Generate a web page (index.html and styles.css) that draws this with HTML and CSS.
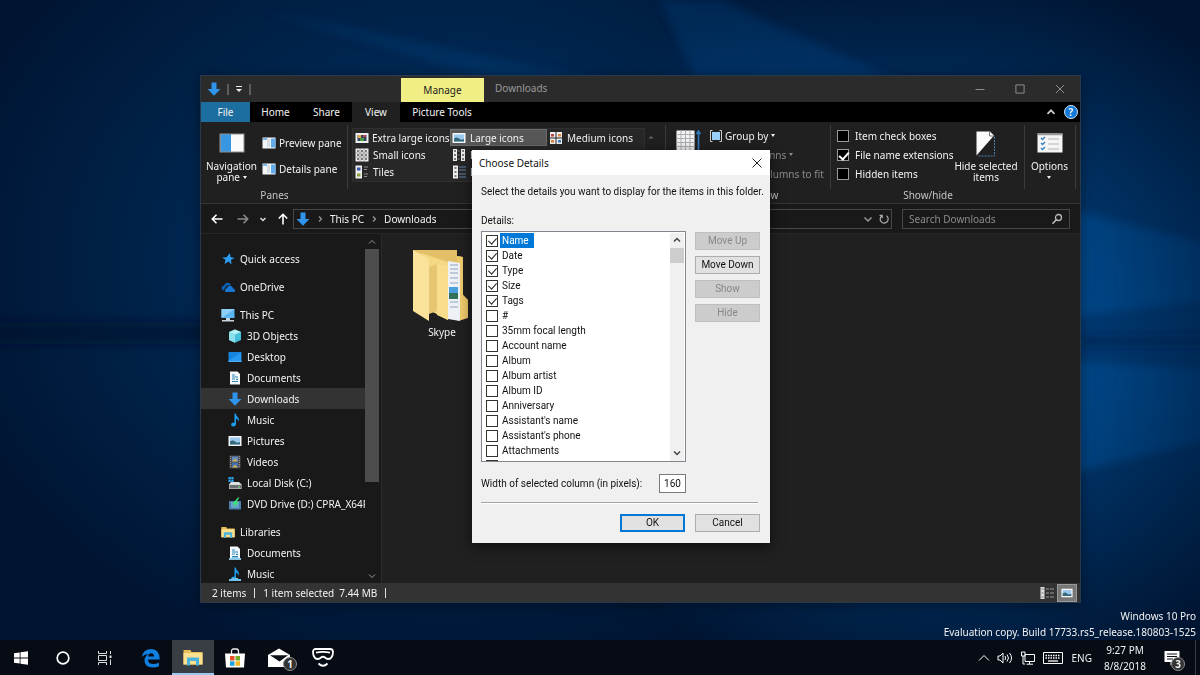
FILE: index.html
```html
<!DOCTYPE html>
<html lang="en">
<head>
<meta charset="utf-8">
<title>Downloads</title>
<link rel="stylesheet" href="styles.css">
</head>
<body>
<svg class="sprite" aria-hidden="true">
  <symbol id="arrow-down" viewBox="0 0 14 14"><path d="M4.500 0.500h5v6.500h4L7 13.800 0.500 7h4z" fill="#2f94ea"/></symbol>
  <symbol id="pic" viewBox="0 0 14 12"><rect x=".5" y="1" width="13" height="10" fill="#f4f6f8"/><rect x="2" y="2.500" width="10" height="7" fill="#9cc8ee"/><path d="M2 6.500q3-2 5 0t5 .5v2.500H2z" fill="#33697a"/></symbol>
  <symbol id="monitor" viewBox="0 0 14 14"><rect x=".5" y="1" width="13" height="9" fill="#5ab4f0"/><path d="M.5 10 13.500 1H.5z" fill="#8fd0f8"/><path d="M5 10h4v2h4v1.500H1V12h4z" fill="#c8d6e0"/></symbol>
  <symbol id="doc" viewBox="0 0 14 14"><path d="M2 .5h7.500L12 3v10.500H2z" fill="#f5f8fa"/><path d="M4 4h3M4 6h6M4 8h3M4 10.500h6M8 8.300h2" stroke="#2b87b8" stroke-width="1.200"/></symbol>
  <symbol id="note" viewBox="0 0 14 14"><path d="M6.500.5h1.300q.3 2.500 2 3.500 2 2 .8 4.800-.4-2.500-2.600-3.300v5.800q-.3 2.200-2.600 2.200Q3.200 13.300 3 11.500q.2-2 3.500-2z" fill="#1b9df0"/></symbol>
  <symbol id="pane" viewBox="0 0 14 12"><rect x=".5" y=".5" width="13" height="11" fill="#f3f6f8"/><rect x="5" y="2" width="3" height="8" fill="#d5dde4"/><rect x="9" y="1.500" width="4.500" height="9" fill="#62acec"/><path d="M1 2h4" stroke="#7eb9ec" stroke-width="2"/></symbol>
  <symbol id="folder" viewBox="0 0 20 18"><path d="M.5 2h7l1 2h11v12.500H.5z" fill="#e9bd55"/><path d="M.5 5h19v11.500H.5z" fill="#fbe08e"/><path d="M4 17.500V9.500h12v8h-3V13H7v4.500z" fill="#4bb3dc"/></symbol>
</svg>

<svg class="wallpaper" viewBox="0 0 1200 675" preserveAspectRatio="none" aria-hidden="true">
  <defs>
    <radialGradient id="glow" gradientUnits="userSpaceOnUse" cx="0" cy="0" r="1" gradientTransform="translate(930 330) scale(420 370)"><stop offset="0" stop-color="#004c92"/><stop offset=".45" stop-color="#003d78" stop-opacity=".8"/><stop offset="1" stop-color="#003d78" stop-opacity="0"/></radialGradient>
    <radialGradient id="haze" gradientUnits="userSpaceOnUse" cx="0" cy="0" r="1" gradientTransform="translate(450 260) scale(520 420)"><stop offset="0" stop-color="#00366c"/><stop offset="1" stop-color="#00366c" stop-opacity="0"/></radialGradient>
    <linearGradient id="beam" x1="0" x2="1"><stop offset="0" stop-color="#0068be" stop-opacity=".55"/><stop offset="1" stop-color="#0068be" stop-opacity=".1"/></linearGradient>
    <filter id="soft" x="-20%" y="-20%" width="140%" height="140%"><feGaussianBlur stdDeviation="5"/></filter>
  </defs>
  <path d="M0 0h1200v675H0z" fill="#001532"/>
  <path d="M0 0h1200v675H0z" fill="url(#haze)"/>
  <path d="M0 0h1200v675H0z" fill="url(#glow)"/>
  <g filter="url(#soft)">
    <path d="M900 165 1210 245v55L1000 325z" fill="url(#beam)"/>
    <path d="M900 350 1210 370v70L1000 490z" fill="url(#beam)"/>
    <path d="M260 10 700 100H560z" fill="#005aa8" opacity=".18"/>
    <path d="M660 0h60l200 90H700z" fill="#005aa8" opacity=".2"/>
    <path d="M-10 322h220v22H-10z" fill="#000f2b" opacity=".6"/>
    <path d="M1080 337h130v8H1080z" fill="#001f48" opacity=".6"/>
  </g>
</svg>

<main class="desktop">
  <section class="window" aria-label="Downloads">
    <header class="titlebar">
      <div class="quick">
        <svg class="i14"><use href="#arrow-down"/></svg>
        <span class="bar"></span>
        <svg class="i8" viewBox="0 0 8 8"><path d="M1 1.500h6" stroke="#eee"/><path d="M1 4h6L4 7z" fill="#eee"/></svg>
        <span class="bar"></span>
      </div>
      <div class="manage">Manage</div>
      <h1 class="wtitle">Downloads</h1>
      <div class="winbtns">
        <button aria-label="Minimize"><svg class="i10" viewBox="0 0 10 10"><path d="M.5 5.500h9"/></svg></button>
        <button aria-label="Maximize"><svg class="i10" viewBox="0 0 10 10"><path d="M.9.9h8.200v8.200H.9z"/></svg></button>
        <button aria-label="Close"><svg class="i10" viewBox="0 0 10 10"><path d="m1 1 8 8M9 1 1 9"/></svg></button>
      </div>
    </header>

    <nav class="tabs">
      <button class="tab file">File</button>
      <button class="tab">Home</button>
      <button class="tab">Share</button>
      <button class="tab view">View</button>
      <button class="tab tools">Picture Tools</button>
      <span class="grow"></span>
      <svg class="i10" viewBox="0 0 10 10"><path d="M1.500 6.800 5 3.300l3.500 3.500" fill="none" stroke="#ccc" stroke-width="1.700"/></svg>
      <button class="help" aria-label="Help">?</button>
    </nav>

    <div class="ribbon">
      <div class="group panes">
        <div class="gbody">
          <button class="big"><svg class="navicon" viewBox="0 0 26 20"><rect x=".5" y=".5" width="25" height="19" fill="#8a9096"/><rect x="2" y="1.500" width="10" height="17" fill="#3797e2"/><rect x="12" y="1.500" width="12.500" height="17" fill="#fbfbfb"/></svg><span>Navigation<br>pane <i class="caret"></i></span></button>
          <div class="stack">
            <button class="row"><svg class="i14"><use href="#pane"/></svg>Preview pane</button>
            <button class="row"><svg class="i14"><use href="#pane"/></svg>Details pane</button>
          </div>
        </div>
        <div class="gname">Panes</div>
      </div>
      <div class="group layout">
        <div class="gallery">
          <button class="row"><svg class="i14" viewBox="0 0 14 12"><rect x=".5" y="1" width="13" height="10" fill="#eceff2"/><path d="M2.500 3h9v6h-9z" fill="#35455f"/><path d="M3 3h3v3H3z" fill="#e8a84c"/><path d="M8 3h3v2H8z" fill="#bf4350"/><path d="M5 6h4v3H5z" fill="#4d9a45"/></svg>Extra large icons</button>
          <button class="row sel"><svg class="i14"><use href="#pic"/></svg>Large icons</button>
          <button class="row"><svg class="i14" viewBox="0 0 14 14"><path d="M1 1h5.500v5.500H1zM7.500 1H13v5.500H7.500zM1 7.500h5.500V13H1zM7.500 7.500H13V13H7.500z" fill="#f0f0f0"/><path d="M2 3h3v2.500H2z" fill="#bb4548"/><path d="M9 3h3v2.500H9z" fill="#e58a38"/><path d="M2 9h3v2.500H2z" fill="#d9853d"/><path d="M9 9h3v2.500H9z" fill="#3d7dc1"/></svg>Medium icons</button>
          <button class="row"><svg class="i14" viewBox="0 0 14 14"><path d="M.5 .5h13v13H.5z" fill="#eee"/><path d="M2 3h2M6 3h2M10 3h2M2 7h2M6 7h2M10 7h2M2 11h2M6 11h2M10 11h2" stroke="#555" stroke-width="1.500"/><path d="M5 0v14M9 0v14M0 5h14M0 9h14" stroke="#777" stroke-width=".6"/></svg>Small icons</button>
          <button class="row"><svg class="i14" viewBox="0 0 14 14"><path d="M1 1h4v12H1zM9 1h4v12H9z" fill="#eee"/><path d="M2 3h2M2 7h2M2 11h2M10 3h2M10 7h2M10 11h2" stroke="#555" stroke-width="1.500"/><path d="M5.500 3h2M5.500 7h2M5.500 11h2" stroke="#888"/></svg>List</button>
          <span></span>
          <button class="row"><svg class="i14" viewBox="0 0 14 14"><path d="M.5 .5H7v13H.5z" fill="#eee"/><path d="M2 2.500h3.500v3H2z" fill="#3557a5"/><path d="M2 8.500h3.500v3H2z" fill="#8ba13b"/><path d="M9 2h4M9 4.500h3M9 9h4M9 11.500h3" stroke="#8d8d8d"/></svg>Tiles</button>
          <button class="row"><svg class="i14" viewBox="0 0 14 14"><path d="M1 .5h5v13H1z" fill="#eee"/><path d="M2.500 3h2M2.500 7h2M2.500 11h2" stroke="#555" stroke-width="1.500"/><path d="M7 2h7M7 5h7M7 9h7M7 12h7" stroke="#6585aa"/></svg>Details</button>
        </div>
        <svg class="i8 up" viewBox="0 0 8 8"><path d="M1.500 5.500h5L4 3z" fill="#666"/></svg>
      </div>
      <div class="group current">
        <div class="gbody">
          <svg class="sort" viewBox="0 0 25 30"><path d="M.5.5h18v25H.5z" fill="#f4f4f4"/><path d="M0 4.500h19M0 8.500h19M0 12.500h19M0 16.500h19M5 0v26M9.500 0v26M14 0v26" stroke="#aaaeb2"/><path d="M22.500 1v25M20.500 4l2-3 2 3" fill="none" stroke="#2f77b9" stroke-width="1.700"/></svg>
          <div class="stack tight">
            <button class="row"><svg class="i12" viewBox="0 0 12 12"><path d="M2.500.5h-2v11h2M9.500.5h2v11h-2" stroke="#ccc" fill="none"/><path d="M2 2h8v8H2z" fill="#9cd0fa"/></svg>Group by <i class="caret"></i></button>
            <button class="row dim"><span class="i12"></span>Add columns <i class="caret"></i></button>
            <button class="row dim"><span class="i12"></span>Size all columns to fit</button>
          </div>
        </div>
        <div class="gname">Current view</div>
      </div>
      <div class="group show">
        <div class="gbody">
          <div class="stack tight">
            <label class="row"><input type="checkbox" class="dcheck">Item check boxes</label>
            <label class="row"><input type="checkbox" class="dcheck" checked>File name extensions</label>
            <label class="row"><input type="checkbox" class="dcheck">Hidden items</label>
          </div>
          <button class="big hide"><svg class="hideicon" viewBox="0 0 20 26"><path d="M.5.500h13.500L18 4.500.5 24.500z" fill="#fafafa"/><path d="M13.500.500v4.500h5" fill="none" stroke="#777"/><path d="M18.500 6v19H2" fill="none" stroke="#4c7fb0" stroke-dasharray="2 1"/></svg><span>Hide selected<br>items</span></button>
        </div>
        <div class="gname">Show/hide</div>
      </div>
      <div class="group options">
        <button class="big"><svg class="navicon" viewBox="0 0 26 20"><rect x=".5" y=".5" width="25" height="19" fill="#f5f5f5"/><path d="M.5 1.500h25" stroke="#9a9a9a" stroke-width="1.500"/><path d="m4 5 1.500 1.500L8 4M4 10l1.500 1.500L8 9M4 15l1.500 1.500L8 14" stroke="#3c7fc2" fill="none" stroke-width="1.500"/><path d="M11 6h11M11 11h11M11 16h11" stroke="#b5b5b5"/></svg><span>Options<br><i class="caret"></i></span></button>
      </div>
    </div>

    <div class="address">
      <svg class="arrow" viewBox="0 0 12 12"><path d="M11.500 6H1.500M5.500 1.800 1.300 6l4.200 4.200" stroke="#fff"/></svg>
      <svg class="arrow" viewBox="0 0 12 12"><path d="M.5 6h10M6.500 1.800 10.700 6l-4.200 4.200" stroke="#8a8a8a"/></svg>
      <svg class="i8" viewBox="0 0 8 8"><path d="m1.500 3 2.500 2.500L6.500 3" fill="none" stroke="#ddd" stroke-width="1.500"/></svg>
      <svg class="arrow" viewBox="0 0 12 12"><path d="M6 11.500v-10M1.800 5.500 6 1.300l4.200 4.200" stroke="#fff"/></svg>
      <div class="path">
        <svg class="i14"><use href="#arrow-down"/></svg>
        <svg class="i8" viewBox="0 0 8 8"><path d="M3 1.500 5.500 4 3 6.500" fill="none" stroke="#999" stroke-width="1.200"/></svg>
        <a href="#pc">This PC</a>
        <svg class="i8" viewBox="0 0 8 8"><path d="M3 1.500 5.500 4 3 6.500" fill="none" stroke="#999" stroke-width="1.200"/></svg>
        <a href="#downloads">Downloads</a>
        <span class="grow"></span>
        <svg class="i10" viewBox="0 0 10 10"><path d="M1.500 3.500 5 7l3.500-3.500" fill="none" stroke="#999" stroke-width="1.500"/></svg>
        <svg class="i10" viewBox="0 0 10 10"><path d="M7.500 1.800A4 4 0 1 1 3 1.700M3.200 4.200V1.300H.5" fill="none" stroke="#aaa" stroke-width="1.200"/></svg>
      </div>
      <div class="search">
        <input type="search" aria-label="Search Downloads" placeholder="Search Downloads">
        <svg class="i12" viewBox="0 0 12 12"><circle cx="7.500" cy="4.500" r="3" fill="none" stroke="#bbb" stroke-width="1.300"/><path d="M5.300 6.700 1.500 10.800" stroke="#bbb" stroke-width="1.600"/></svg>
      </div>
    </div>

    <div class="content">
      <nav class="tree">
        <ul>
          <li class="top"><svg class="i14" viewBox="0 0 14 14"><path d="m9 1 .5 4 4 1-3.500 2 .5 4.500L7.500 9.500 3.500 12l1-4.200L1 5.500l4.500-.3z" fill="#2b9cf0"/></svg>Quick access</li>
          <li class="top"><svg class="i14" viewBox="0 0 14 14"><path d="M2.500 10.500Q-.5 9 1.200 6.500L3 5.500Q4.500 2 7.500 3q2 0 2.500 2L6 5.500 4 8z" fill="#0a62b8"/><path d="M4.500 12Q3 9 6 8q1-3 4-2 2 .5 2 2.500 3 .5 1.500 3.500z" fill="#1678d2"/></svg>OneDrive</li>
          <li class="top"><svg class="i14"><use href="#monitor"/></svg>This PC</li>
          <li><svg class="i14" viewBox="0 0 14 14"><path d="M1 3 7 .5 13 3v8l-6 2.800L1 11z" fill="#45c0d8"/><path d="m1 3 6 2.500L13 3 7 .5z" fill="#b4f0f4"/><path d="M1 3l6 2.500v8.300L1 11z" fill="#8be0ea"/></svg>3D Objects</li>
          <li><svg class="i14" viewBox="0 0 14 14"><path d="M.5 2h13v10H.5z" fill="#1683dc"/><path d="M.5 10.500h13V12H.5z" fill="#4aaef8"/><path d="M1 10 13 2.500V10z" fill="#2597f0"/></svg>Desktop</li>
          <li><svg class="i14"><use href="#doc"/></svg>Documents</li>
          <li class="on"><svg class="i14"><use href="#arrow-down"/></svg>Downloads</li>
          <li><svg class="i14"><use href="#note"/></svg>Music</li>
          <li><svg class="i14"><use href="#pic"/></svg>Pictures</li>
          <li><svg class="i14" viewBox="0 0 14 14"><path d="M1.500.5h11v13h-11z" fill="#4a4a50"/><path d="M4 1.500h6v5H4z" fill="#618ac0"/><path d="M4 7.500h6v5H4z" fill="#3f70b4"/><path d="m4 6.500 3-3 3 3zM4 12.500l3-3 3 3z" fill="#cdb04d"/><path d="M2.700 1v12M11.300 1v12" stroke="#a5a5a5" stroke-dasharray="1 1"/></svg>Videos</li>
          <li><svg class="i14" viewBox="0 0 14 14"><path d="M1 8.500 3 6h8l2.500 2.500V13H1z" fill="#dce0e2"/><path d="M1.500 9h11.500v3.500H1.500z" fill="#6a7174"/><path d="M10 11h2" stroke="#65ee76"/><path d="M.5 1h2.300v2.300H.5zM3.300 1h2.300v2.300H3.300zM.5 3.800h2.300V6H.5zM3.300 3.800h2.300V6H3.300z" fill="#29a6eb"/></svg>Local Disk (C:)</li>
          <li><svg class="i14" viewBox="0 0 14 14"><path d="M1 4h12v8.500H1z" fill="#4b7cae"/><path d="M3 5h8v6H3z" fill="#6ba2cc"/><path d="m10 .5-6 6.800h3L5.500 11 11 5H8.500L11.500.5z" fill="#3be276"/></svg>DVD Drive (D:) CPRA_X64F</li>
          <li class="top lib"><svg class="i14"><use href="#folder"/></svg>Libraries</li>
          <li><svg class="i14" viewBox="0 0 14 14"><use href="#doc"/><path d="M1 12h3v-1h6v1h3v2H1z" fill="#8fc7e2"/></svg>Documents</li>
          <li><svg class="i14" viewBox="0 0 14 14"><use href="#note"/><path d="M1 12h3v-1h6v1h3v2H1z" fill="#6fc3ee"/></svg>Music</li>
        </ul>
        <div class="scroll">
          <svg class="i8" viewBox="0 0 8 8"><path d="M1 5.500 4 2.500l3 3" fill="none" stroke="#999"/></svg>
          <span class="thumb"></span>
          <span class="grow"></span>
          <svg class="i8" viewBox="0 0 8 8"><path d="m1 2.500 3 3 3-3" fill="none" stroke="#999"/></svg>
        </div>
      </nav>
      <div class="files">
        <figure class="item">
          <svg class="skype" viewBox="0 0 56 74"><path d="M0 1h44v6l6 1v38l5 5v18l-8 2.500L14 60 0 30z" fill="#e3bf68"/><path d="M44 7l6 1v38l5 5v17l-8 3z" fill="#f0cb6c"/><path d="m35 12 12 2v58l-12-2z" fill="#eef1f5"/><path d="M37 16h8M37 20h8M37 24h8M37 29h8M37 34h8M37 53h8M37 58h8" stroke="#8fa5c2"/><path d="M36 38h9v6h-9z" fill="#4a9fdc"/><path d="M36 44h9v6h-9z" fill="#33705a"/><path d="m8 4 27 9v58L16 61z" fill="#f5d883"/><path d="m16 18 8-3v47l-8 3z" fill="#e6c673"/><path d="m24 15 11 2v54l-11-5z" fill="#f8dd8d"/><path d="m0 1 16 9v62L0 62z" fill="#fae29a"/></svg>
          <figcaption>Skype</figcaption>
        </figure>
      </div>
    </div>

    <footer class="status">
      <span>2 items</span><span class="sep"></span><span>1 item selected</span><span class="size">7.44 MB</span><span class="sep"></span>
      <span class="grow"></span>
      <button aria-label="Details view"><svg class="i14" viewBox="0 0 14 12"><path d="M.5 0h4v12h-4z" fill="#ddd"/><path d="M1.500 2h2M1.500 6h2M1.500 10h2" stroke="#777"/><path d="M6 2h3M10 2h4M6 6h3M10 6h4M6 10h3M10 10h4" stroke="#999"/></svg></button>
      <button class="on" aria-label="Large icons view"><svg class="i12"><use href="#pic"/></svg></button>
    </footer>
  </section>

  <section class="dialog" role="dialog" aria-labelledby="dtitle">
    <header><h2 id="dtitle">Choose Details</h2><button aria-label="Close"><svg class="i10" viewBox="0 0 10 10"><path d="m.5.5 9 9M9.500.5l-9 9"/></svg></button></header>
    <div class="dbody">
      <p>Select the details you want to display for the items in this folder.</p>
      <div class="dlabel" id="dl">Details:</div>
      <div class="cols">
        <div class="list" role="group" aria-labelledby="dl">
          <div class="rows">
            <label class="cur"><input type="checkbox" checked><span>Name</span></label>
            <label><input type="checkbox" checked><span>Date</span></label>
            <label><input type="checkbox" checked><span>Type</span></label>
            <label><input type="checkbox" checked><span>Size</span></label>
            <label><input type="checkbox" checked><span>Tags</span></label>
            <label><input type="checkbox"><span>#</span></label>
            <label><input type="checkbox"><span>35mm focal length</span></label>
            <label><input type="checkbox"><span>Account name</span></label>
            <label><input type="checkbox"><span>Album</span></label>
            <label><input type="checkbox"><span>Album artist</span></label>
            <label><input type="checkbox"><span>Album ID</span></label>
            <label><input type="checkbox"><span>Anniversary</span></label>
            <label><input type="checkbox"><span>Assistant's name</span></label>
            <label><input type="checkbox"><span>Assistant's phone</span></label>
            <label><input type="checkbox"><span>Attachments</span></label>
            <label><input type="checkbox" aria-label="Next detail"></label>
          </div>
          <div class="lscroll">
            <svg class="i8" viewBox="0 0 8 8"><path d="M1 5.500 4 2.500l3 3" fill="none" stroke="#444" stroke-width="1.500"/></svg>
            <span class="lthumb"></span>
            <span class="grow"></span>
            <svg class="i8" viewBox="0 0 8 8"><path d="m1 2.500 3 3 3-3" fill="none" stroke="#444" stroke-width="1.500"/></svg>
          </div>
        </div>
        <div class="side">
          <button class="btn" disabled>Move Up</button>
          <button class="btn">Move Down</button>
          <button class="btn" disabled>Show</button>
          <button class="btn" disabled>Hide</button>
        </div>
      </div>
      <div class="width"><label for="w">Width of selected column (in pixels):</label><input id="w" type="text" value="160"></div>
      <hr>
      <div class="actions"><button class="btn ok">OK</button><button class="btn">Cancel</button></div>
    </div>
  </section>

  <div class="watermark">Windows 10 Pro<br>Evaluation copy. Build 17733.rs5_release.180803-1525</div>
</main>

<footer class="taskbar">
  <button aria-label="Start"><svg class="i16" viewBox="0 0 16 16"><path d="m1 3.200 5.700-.8v5.200H1zM7.500 2.300 15 1.200v6.400H7.500zM1 8.400h5.700v5.200L1 12.800zM7.500 8.400H15v6.400l-7.500-1.100z" fill="#fff"/></svg></button>
  <button aria-label="Search"><svg class="i16" viewBox="0 0 16 16"><circle cx="8" cy="8" r="5.800" fill="none" stroke="#fff" stroke-width="1.700"/></svg></button>
  <button aria-label="Task View"><svg class="i16" viewBox="0 0 16 16"><path d="M1.500 1v2.500h8V1M1.500 5.500h8v5h-8zM1.500 15v-2.500h8V15" fill="none" stroke="#ddd"/><path d="M13.500 1v3M13.500 9.500V15" stroke="#ddd"/><path d="M12.500 5.500h2v2.500h-2z" fill="#ddd"/></svg></button>
  <button class="edge" aria-label="Edge"><svg class="i20" viewBox="0 0 20 20"><path d="M1 9Q2 1 10.500 1 18.500 1 18.800 11.500H7Q7 16 12.500 16q3 0 5.500-1.500v3.700Q15.500 19.500 12 19.500 3.500 19.300 3.500 12.500q0-4 4-6.500Q3.500 6 1 9zm6.200-.5H13Q13 5.300 10.200 5.300 7.600 5.300 7.200 8.500z" fill="#0f7fe0" fill-rule="evenodd"/></svg></button>
  <button class="active" aria-label="File Explorer"><svg class="i20"><use href="#folder"/></svg></button>
  <button aria-label="Store"><svg class="i20" viewBox="0 0 20 20"><path d="M6.500 6V3.500Q6.500 1 8.500 1h3q2 0 2 2.500V6" fill="none" stroke="#eee" stroke-width="1.300"/><path d="M0 5.500h20l-1 14H1z" fill="#fff"/><path d="M5 8h4.500v4.500H5z" fill="#e8502c"/><path d="M10.500 8H15v4.500h-4.500z" fill="#75ac28"/><path d="M5 13.300h4.500v4.500H5z" fill="#1ba1dd"/><path d="M10.500 13.300H15v4.500h-4.500z" fill="#f4b622"/></svg></button>
  <button class="wide" aria-label="Mail"><svg class="i22" viewBox="0 0 22 20"><path d="M0 7 11 .5 22 7v12H0z" fill="#fff"/><path d="M2 7.300h18l-8.500 6.200z" fill="#0a0f18"/></svg><b class="badge">1</b></button>
  <button aria-label="Mixed Reality Portal"><svg class="i22" viewBox="0 0 22 20"><path d="M4 1h14q3 0 3 3.200 0 3.300-2 5.800-1 1-3 1-1.500 0-3-1.500-2-1.600-4 0Q7.500 11 6 11q-2 0-3-1-2-2.500-2-5.800T4 1z" fill="none" stroke="#fff" stroke-width="1.800"/><path d="M4 4.700Q11 3 18 4.700M6.500 15.500q4.500 4.500 9 0" fill="none" stroke="#fff" stroke-width="1.800"/></svg></button>
  <span class="grow"></span>
  <div class="tray">
    <svg class="i12" viewBox="0 0 12 12"><path d="M1 8.500 6 3.500l5 5" fill="none" stroke="#fff"/></svg>
    <svg class="i16" viewBox="0 0 16 16"><path d="M1 6v4h2l3 3V3L3 6z" fill="none" stroke="#fff"/><path d="M8 6q1.500 2 0 4M10 4.500q3 3.500 0 7M12.500 3q4 5 0 10" fill="none" stroke="#fff"/></svg>
    <svg class="i16" viewBox="0 0 16 16"><path d="M5 4.500h9.500v7H5zM9.500 11.500v2.500M6.500 14.200h6.500M1.500 2v4H5V2zM3 6v8h2" fill="none" stroke="#fff"/></svg>
    <svg class="kbd" viewBox="0 0 20 12"><path d="M.5.500h19v11H.5z" fill="none" stroke="#fff"/><path d="M2.500 3.500h15M2.500 6h15" stroke="#fff" stroke-dasharray="1.500 1" stroke-width="1.300"/><path d="M5 9h10" stroke="#fff" stroke-width="1.300"/></svg>
    <span>ENG</span>
    <time>9:27 PM<br>8/8/2018</time>
    <button class="note" aria-label="Notifications"><svg class="i16" viewBox="0 0 16 16"><path d="M.5 1h15v11H10l-3.500 3.500V12h-6z" fill="#fff"/><path d="M3 4h10M3 6.500h10M3 9h6" stroke="#0a0f18"/></svg><b class="badge">3</b></button>
  </div>
</footer>
</body>
</html>
```

FILE: styles.css
```css
* { box-sizing: border-box; }
body {
  margin: 0; min-height: 100vh; display: flex; flex-direction: column;
  font: 10px/12px "Noto Sans", "Open Sans", sans-serif; color: #f2f2f2;
  background: #001532;
}
button, input { font: inherit; color: inherit; }
button { border: 0; background: none; padding: 0; }
h1, h2, p, ul, figure { margin: 0; padding: 0; font-size: inherit; font-weight: 400; }
a { color: inherit; text-decoration: none; }
svg { display: block; flex: none; }
.sprite { position: absolute; width: 0; height: 0; }
.wallpaper { position: absolute; inset: 0; width: 100%; height: 100%; }
.i8 { width: 8px; height: 8px; }
.i10 { width: 10px; height: 10px; }
.i12 { width: 12px; height: 12px; flex: none; }
.i14 { width: 14px; height: 14px; }
.i16 { width: 16px; height: 16px; }
.i20 { width: 20px; height: 20px; }
.i22 { width: 22px; height: 20px; }
.grow { flex: 1; }
.desktop { position: relative; flex: 1; }

.window {
  position: absolute; inset: 75px 119px 37px 200px;
  display: flex; flex-direction: column; overflow: hidden;
  border: 1px solid #29394c; background: #202020;
  box-shadow: 0 2px 12px rgba(0, 0, 0, .4);
}
.titlebar { display: flex; height: 26px; background: #2b2b2b; }
.quick { display: flex; align-items: center; gap: 6px; width: 200px; padding-left: 6px; }
.bar { width: 2px; height: 11px; background: #5c5c5c; }
.manage { width: 83px; margin-top: 2px; line-height: 24px; text-align: center; color: #222; background: #f0ee84; }
.wtitle { flex: 1; padding-left: 11px; line-height: 25px; color: #999; }
.winbtns { display: flex; }
.winbtns button { width: 40px; display: grid; place-items: center; }
.winbtns svg { fill: none; stroke: #8c8c8c; }

.tabs { display: flex; align-items: center; height: 20px; background: #000; padding-right: 2px; }
.tab { width: 51px; height: 20px; text-align: center; }
.file { width: 49px; background: #1c6ea0; }
.view { width: 48px; background: #202020; }
.tools { width: 84px; }
.help { width: 14px; height: 14px; margin-left: 8px; border: 1px solid #cfe5f8; border-radius: 50%; background: #1479d8; line-height: 12px; font-weight: 700; }

.ribbon { display: flex; height: 82px; border-bottom: 1px solid #343434; }
.group { position: relative; display: flex; flex-direction: column; padding-top: 6px; }
.group::after { content: ""; position: absolute; right: 0; top: 3px; height: 64px; width: 1px; background: #3a3a3a; }
.gbody { display: flex; flex: 1; }
.gname { height: 14px; text-align: center; color: #c4c4c4; }
.panes { width: 147px; }
.layout { width: 318px; flex-direction: row; padding: 6px 0 0 4px; }
.current { width: 165px; }
.show { width: 194px; }
.options { width: 51px; }
.big { display: flex; flex-direction: column; align-items: center; gap: 5px; padding-top: 5px; width: 61px; line-height: 11px; }
.big span { white-space: nowrap; }
.options .big { width: 49px; }
.navicon { width: 26px; height: 20px; margin-bottom: 3px; }
.hideicon { width: 20px; height: 26px; }
.caret { display: inline-block; border: 2px solid transparent; border-top: 3px solid currentColor; border-bottom: 0; vertical-align: 2px; }
.row { display: flex; align-items: center; gap: 3px; white-space: nowrap; text-align: left; }
.stack { display: flex; flex-direction: column; gap: 11px; padding-top: 7px; }
.stack .row { height: 15px; }
.tight { gap: 4px; padding-top: 0; }
.dim { color: #8c8c8c; }
.gallery { display: grid; grid-template-columns: repeat(3, 97px); grid-auto-rows: 17px; width: 293px; height: 54px; border: 1px solid #303030; background: #272727; }
.gallery .row { padding-left: 2px; }
.gallery .row:not(:first-child) { gap: 4px; }
.sel { background: #575757; outline: 1px solid #6b6b6b; outline-offset: -1px; }
.up { margin: 5px 0 0 2px; }
.sort { width: 25px; height: 30px; margin: 2px 9px 0 10px; }
.hide { width: 66px; margin-left: 3px; padding-top: 3px; gap: 4px; }
.show .stack { width: 119px; padding-left: 6px; }
.show .row { gap: 6px; }
.dcheck { appearance: none; position: relative; width: 12px; height: 12px; margin: 0; border: 1px solid #999; background: #000; flex: none; }
.dcheck:checked::after { content: ""; position: absolute; left: 3px; top: 0; width: 4px; height: 8px; border: solid #fff; border-width: 0 2px 2px 0; transform: rotate(42deg); }

.address { display: flex; align-items: center; height: 30px; padding: 0 10px; gap: 10px; background: #191919; border-bottom: 1px solid #262626; }
.arrow { width: 12px; height: 12px; fill: none; stroke-width: 1.600; }
.address > .arrow + .arrow { margin-left: 4px; }
.path { flex: 1; display: flex; align-items: center; gap: 6px; height: 20px; margin-left: -6px; padding: 0 2px; border: 1px solid #484848; }
.search { display: flex; align-items: center; width: 168px; height: 20px; padding: 0 6px; border: 1px solid #484848; }
.search input { flex: 1; min-width: 0; border: 0; padding: 0; background: none; outline: 0; }
.search input::placeholder { color: #8b8b8b; opacity: 1; }

.content { flex: 1; min-height: 0; display: flex; }
.tree { display: flex; width: 181px; background: #191919; border-right: 1px solid #2b2b2b; }
.tree ul { width: 164px; overflow: hidden; list-style: none; padding-top: 7px; }
.tree li { display: flex; align-items: center; gap: 5px; height: 21px; padding-left: 27px; white-space: nowrap; }
.tree .top { margin-top: 7px; padding-left: 20px; }
.tree .on { background: #333; }
.scroll { display: flex; flex-direction: column; align-items: center; width: 14px; padding: 4px 0 3px; }
.thumb { width: 14px; height: 68%; margin-top: 3px; background: #4d4d4d; }
.files { flex: 1; padding: 15px 30px; }
.item { width: 60px; text-align: center; }
.skype { width: 56px; height: 74px; margin: 0 0 3px 1px; }
.status { display: flex; align-items: center; height: 19px; padding: 0 3px 0 11px; background: #333; }
.sep { width: 1px; height: 10px; margin: 0 8px; background: #ddd; }
.size { margin-left: 5px; }
.status button { width: 20px; height: 18px; display: grid; place-items: center; }
.status .on { background: #777; border: 1px solid #999; }

.dialog { position: absolute; left: 472px; top: 150px; width: 298px; color: #111; background: #f0f0f0; box-shadow: 0 3px 12px rgba(0, 0, 0, .6); }
.dialog header { display: flex; justify-content: space-between; align-items: center; height: 25px; padding: 0 8px 0 7px; background: #fff; }
.dialog header svg { fill: none; stroke: #222; }
.dbody { padding: 10px 10px 11px 9px; font-family: Roboto, "Liberation Sans", sans-serif; }
.dbody p { line-height: 14px; white-space: nowrap; }
.dlabel { margin-top: 15px; line-height: 14px; }
.cols { display: flex; gap: 9px; margin-top: 3px; }
.list { display: flex; flex: 1; height: 231px; padding: 1px 1px 0 3px; border: 1px solid #828790; background: #fff; overflow: hidden; }
.rows { flex: 1; overflow: hidden; }
.rows label { display: flex; align-items: center; height: 15px; gap: 2px; }
.rows input { appearance: none; position: relative; width: 12px; height: 12px; margin: 0 0 0 1px; border: 1px solid #333; flex: none; }
.rows input:checked::after { content: ""; position: absolute; left: 3px; top: 0; width: 4px; height: 7px; border: solid #222; border-width: 0 1px 1px 0; transform: rotate(42deg); }
.rows span { padding: 0 2px; line-height: 15px; }
.rows .cur span { color: #fff; background: #0078d7; padding-right: 5px; }
.lscroll { display: flex; flex-direction: column; align-items: center; width: 14px; padding: 3px 0 4px; background: #f0f0f0; }
.lthumb { width: 14px; height: 15px; margin-top: 4px; background: #cdcdcd; }
.side { display: flex; flex-direction: column; gap: 6px; padding-top: 1px; }
.btn { width: 65px; height: 18px; border: 1px solid #adadad; background: #e1e1e1; }
.btn:disabled { color: #888; background: #ccc; border-color: #bfbfbf; }
.width { display: flex; justify-content: space-between; align-items: center; width: 205px; margin-top: 12px; white-space: nowrap; }
.width input { width: 27px; height: 19px; padding: 0; text-align: center; border: 1px solid #7a7a7a; background: #fff; }
hr { margin: 9px 2px 10px 0; border: 0; height: 2px; background: #a5a5a5; border-bottom: 1px solid #fff; }
.actions { display: flex; justify-content: flex-end; gap: 10px; }
.ok { border: 2px solid #0078d7; }

.watermark { position: absolute; right: 4px; bottom: 0; text-align: right; line-height: 16px; }

.taskbar { position: relative; display: flex; height: 35px; background: #060b14; }
.taskbar button { position: relative; width: 42px; display: grid; place-items: center; }
.taskbar .edge { margin-left: 4px; }
.taskbar .active { background: #393e45; border-bottom: 2px solid #9cc9ee; }
.taskbar .wide { width: 46px; }
.badge { position: absolute; right: 5px; bottom: 4px; width: 14px; height: 14px; border: 1px solid #8c8c8c; border-radius: 50%; background: #333; line-height: 12px; text-align: center; }
.tray { display: flex; align-items: center; padding-right: 4px; }
.tray > svg { margin-right: 7px; }
.tray > span { margin: 0 10px 0 2px; }
.kbd { width: 20px; height: 12px; }
.tray time { width: 46px; line-height: 16px; text-align: center; }
.taskbar .note { width: 48px; height: 35px; border-right: 1px solid #3a3f46; }
.note .badge { right: 10px; }
```
